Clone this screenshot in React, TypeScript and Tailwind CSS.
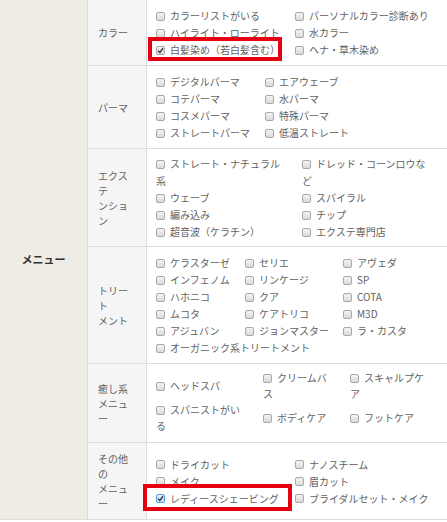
import React from "react";

type Item = { t: React.ReactNode; checked?: boolean; focus?: boolean; span?: boolean };

const Box = ({ checked, focus }: { checked?: boolean; focus?: boolean }) => (
  <span
    className={
      focus
        ? "relative -top-[1px] mr-[5px] inline-flex h-[9px] w-[9px] items-center justify-center rounded-[2px] border border-[#5b9ee6] bg-gradient-to-b from-[#e4f0fc] to-[#bcd8f5] align-middle"
        : "relative -top-[1px] mr-[5px] inline-flex h-[9px] w-[9px] items-center justify-center rounded-[2px] border border-[#a8a8a8] bg-gradient-to-b from-[#f4f4f4] to-[#dadada] align-middle"
    }
  >
    {checked && (
      <svg viewBox="0 0 10 10" className="h-[7px] w-[7px]">
        <path d="M1.5 5.2 L4 7.8 L8.6 1.8" fill="none" stroke="#333" strokeWidth="1.9" />
      </svg>
    )}
  </span>
);

const Opt = ({ it }: { it: Item }) => (
  <div className={it.span ? "col-span-3" : ""}>
    <Box checked={it.checked} focus={it.focus} />
    {it.t}
  </div>
);

const Label = ({ lines }: { lines: string[] }) => (
  <div className="flex w-[59px] shrink-0 flex-col justify-center border-r border-[#dcdcdc] bg-[#f5f5f5] pl-[10px] leading-[15px]">
    {lines.map((l, i) => (
      <div key={i}>{l}</div>
    ))}
  </div>
);

export default function App() {
  const color: Item[] = [
    { t: "カラーリストがいる" },
    { t: "パーソナルカラー診断あり" },
    { t: "ハイライト・ローライト" },
    { t: "水カラー" },
    { t: "白髪染め（若白髪含む）", checked: true },
    { t: "ヘナ・草木染め" },
  ];
  const perm: Item[] = [
    { t: "デジタルパーマ" },
    { t: "エアウェーブ" },
    { t: "コテパーマ" },
    { t: "水パーマ" },
    { t: "コスメパーマ" },
    { t: "特殊パーマ" },
    { t: "ストレートパーマ" },
    { t: "低温ストレート" },
  ];
  const ext: Item[] = [
    { t: <>ストレート・ナチュラル<br />系</> },
    { t: <>ドレッド・コーンロウな<br />ど</> },
    { t: "ウェーブ" },
    { t: "スパイラル" },
    { t: "編み込み" },
    { t: "チップ" },
    { t: "超音波（ケラチン）" },
    { t: "エクステ専門店" },
  ];
  const treat: Item[] = [
    { t: "ケラスターゼ" },
    { t: "セリエ" },
    { t: "アヴェダ" },
    { t: "インフェノム" },
    { t: "リンケージ" },
    { t: "SP" },
    { t: "ハホニコ" },
    { t: "クア" },
    { t: "COTA" },
    { t: "ムコタ" },
    { t: "ケアトリコ" },
    { t: "M3D" },
    { t: "アジュバン" },
    { t: "ジョンマスター" },
    { t: "ラ・カスタ" },
    { t: "オーガニック系トリートメント", span: true },
  ];
  const relax: Item[] = [
    { t: "ヘッドスパ" },
    { t: <>クリームバ<br />ス</> },
    { t: <>スキャルプケ<br />ア</> },
    { t: <>スパニストがい<br />る</> },
    { t: "ボディケア" },
    { t: "フットケア" },
  ];
  const other: Item[] = [
    { t: "ドライカット" },
    { t: "ナノスチーム" },
    { t: "メイク" },
    { t: "眉カット" },
    { t: "レディースシェービング", checked: true, focus: true },
    { t: "ブライダルセット・メイク" },
  ];

  return (
    <div
      className="relative h-[522px] w-[447px] overflow-hidden bg-white text-[10px] text-[#626262]"
      style={{ fontFamily: '"Noto Sans CJK JP", "Noto Sans", sans-serif' }}
    >
      <div className="flex border-b border-[#dcdcdc]">
        <div className="flex w-[88px] shrink-0 items-center justify-center border-r border-[#dcdcdc] bg-[#efece6] text-[11px] font-bold text-[#333]">
          メニュー
        </div>
        <div className="flex flex-1 flex-col">
          <div className="flex border-b border-[#dcdcdc]">
            <Label lines={["カラー"]} />
            <div className="grid flex-1 grid-cols-[139px_1fr] py-[7px] pl-[9px] leading-[17px]">
              {color.map((it, i) => (
                <Opt key={i} it={it} />
              ))}
            </div>
          </div>
          <div className="flex border-b border-[#dcdcdc]">
            <Label lines={["パーマ"]} />
            <div className="grid flex-1 grid-cols-[109px_1fr] py-[7px] pl-[9px] leading-[17px]">
              {perm.map((it, i) => (
                <Opt key={i} it={it} />
              ))}
            </div>
          </div>
          <div className="flex border-b border-[#dcdcdc]">
            <Label lines={["エクス", "テ", "ンショ", "ン"]} />
            <div className="grid flex-1 grid-cols-[146px_1fr] py-[6px] pl-[9px] leading-[17px]">
              {ext.map((it, i) => (
                <Opt key={i} it={it} />
              ))}
            </div>
          </div>
          <div className="flex border-b border-[#dcdcdc]">
            <Label lines={["トリー", "ト", "メント"]} />
            <div className="grid flex-1 grid-cols-[89px_98px_1fr] py-[7px] pl-[9px] leading-[17px]">
              {treat.map((it, i) => (
                <Opt key={i} it={it} />
              ))}
            </div>
          </div>
          <div className="flex border-b border-[#dcdcdc]">
            <Label lines={["癒し系", "メニュ", "ー"]} />
            <div className="grid flex-1 grid-cols-[107px_87px_1fr] items-center pt-[6px] pb-[8px] pl-[9px] leading-[16px]">
              {relax.map((it, i) => (
                <div key={i} className="flex h-[32px] items-center">
                  <div>
                    <Box />
                    {it.t}
                  </div>
                </div>
              ))}
            </div>
          </div>
          <div className="flex">
            <div className="flex w-[59px] shrink-0 flex-col justify-center border-r border-[#dcdcdc] bg-[#f5f5f5] py-[8px] pl-[10px] leading-[15px]">
              <div>その他</div>
              <div>の</div>
              <div>メニュ</div>
              <div>ー</div>
            </div>
            <div className="grid flex-1 grid-cols-[139px_1fr] content-center pl-[9px] leading-[17px]">
              {other.map((it, i) => (
                <Opt key={i} it={it} />
              ))}
            </div>
          </div>
        </div>
      </div>

      <div className="pointer-events-none absolute left-[148px] top-[37px] h-[24px] w-[134px] border-[4px] border-[#e60012]" />
      <div className="pointer-events-none absolute left-[143px] top-[484px] h-[27px] w-[149px] border-[4px] border-[#e60012]" />
    </div>
  );
}
